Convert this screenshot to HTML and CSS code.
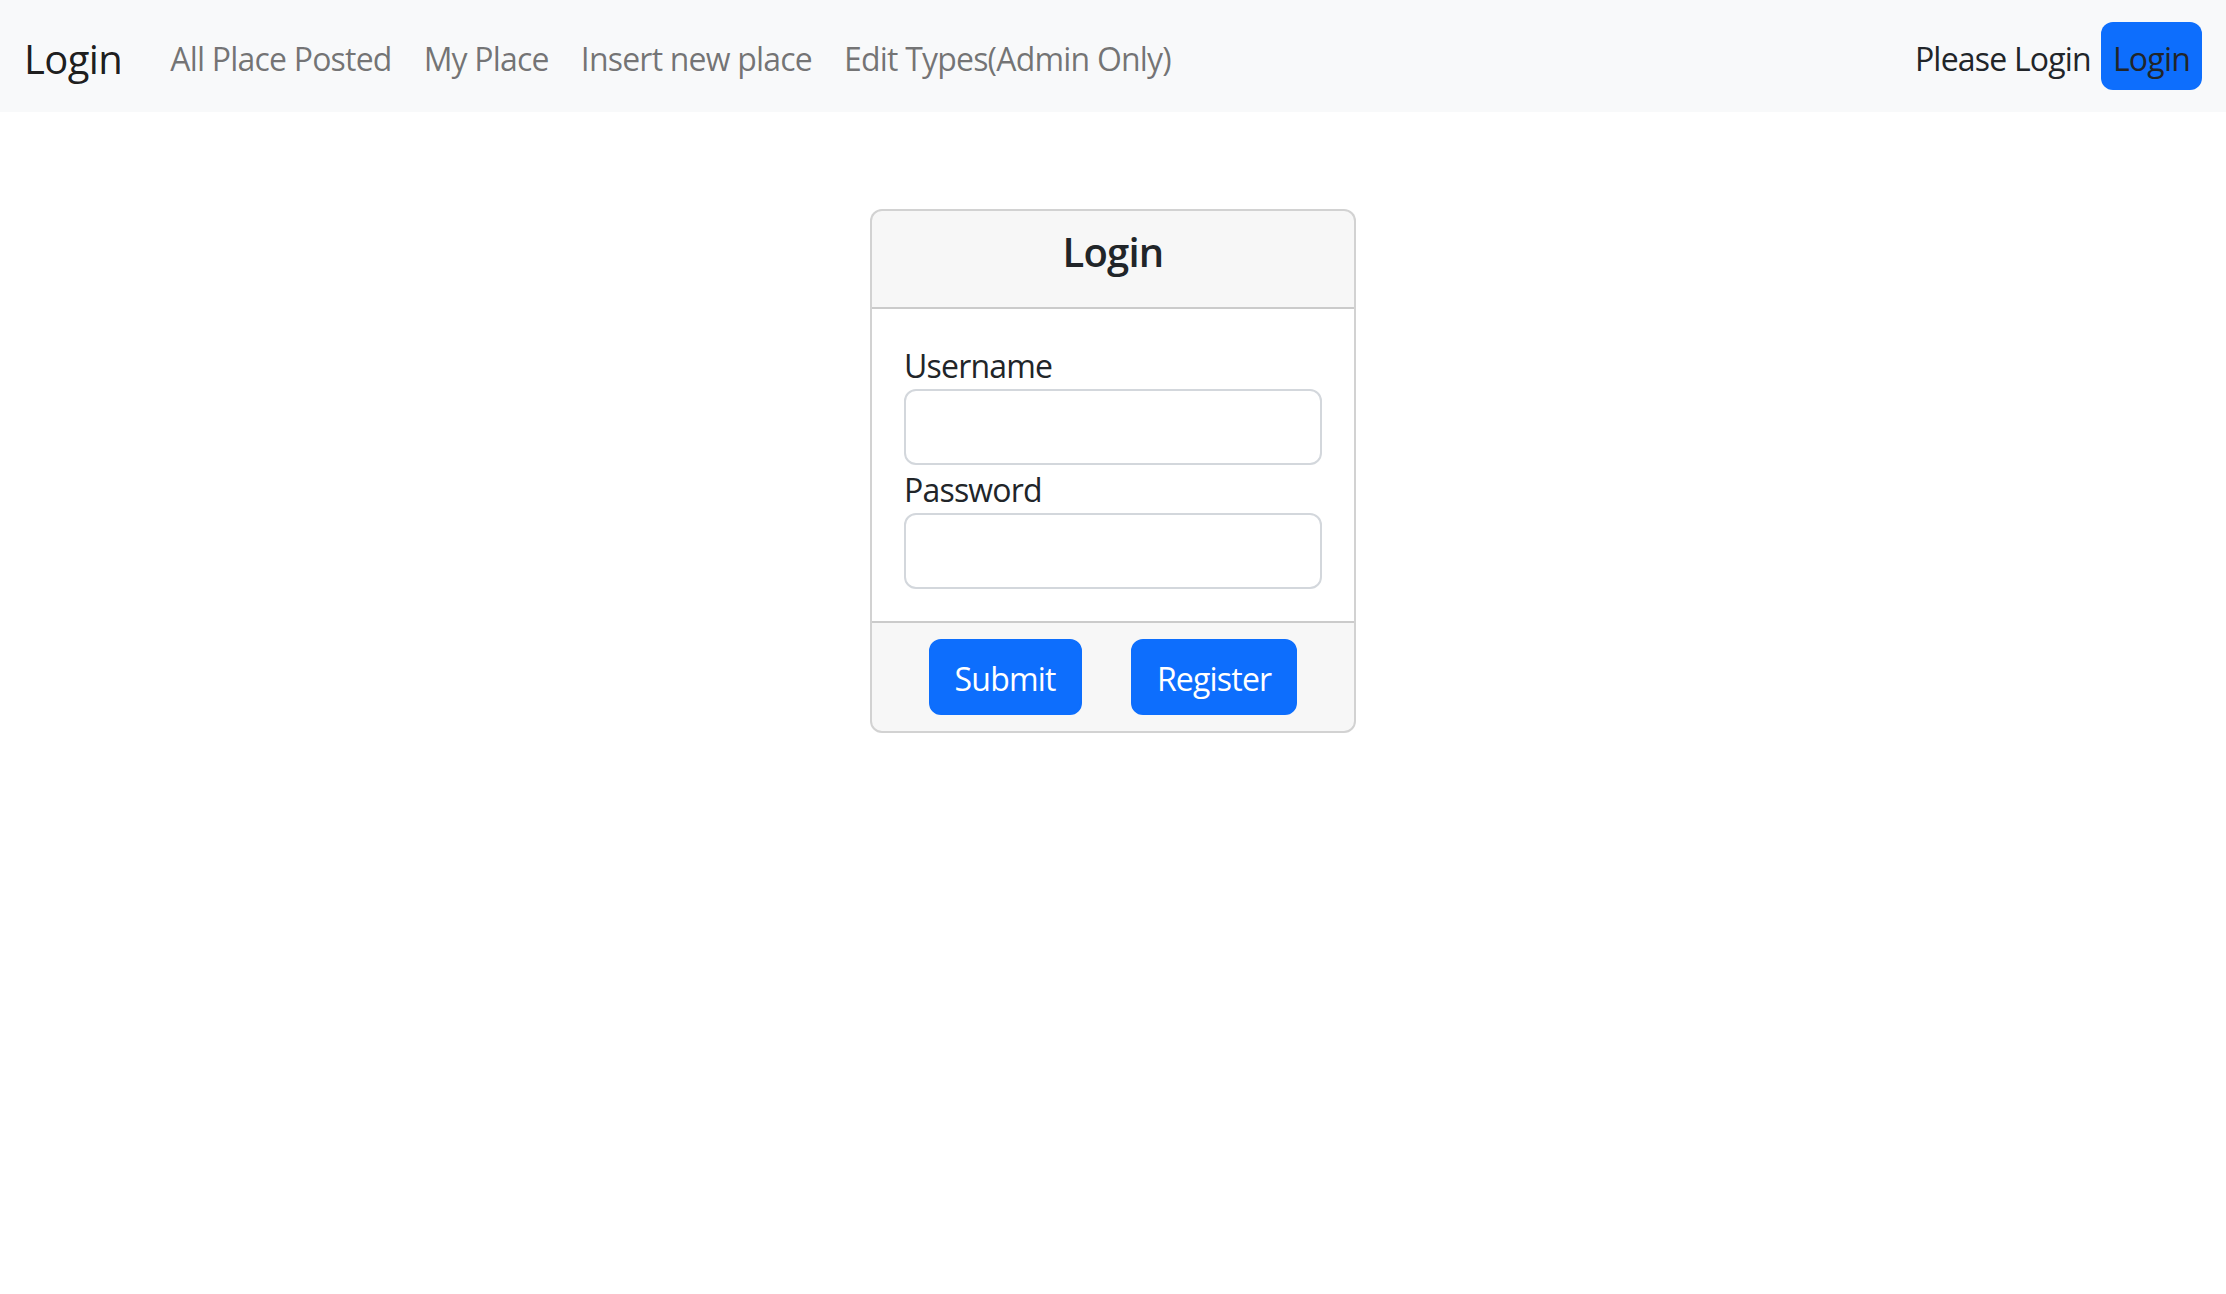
FILE: index.html
```html
<!DOCTYPE html>
<html lang="en">
<head>
<meta charset="utf-8">
<title>Login</title>
<link rel="stylesheet" href="styles.css">
</head>
<body>
<nav class="navbar">
  <a class="brand" href="#">Login</a>
  <ul class="nav-links">
    <li><a class="nav-link" href="#">All Place Posted</a></li>
    <li><a class="nav-link" href="#">My Place</a></li>
    <li><a class="nav-link" href="#">Insert new place</a></li>
    <li><a class="nav-link" href="#">Edit Types(Admin Only)</a></li>
  </ul>
  <div class="nav-right">
    <span class="nav-text">Please Login</span>
    <a class="nav-login" href="#">Login</a>
  </div>
</nav>
<main class="main">
  <form class="card">
    <div class="card-header">
      <h5 class="card-title">Login</h5>
    </div>
    <div class="card-body">
      <label class="label" for="username">Username</label>
      <input class="input" id="username" type="text">
      <label class="label" for="password">Password</label>
      <input class="input" id="password" type="password">
    </div>
    <div class="card-footer">
      <button class="btn" type="button">Submit</button>
      <button class="btn" type="button">Register</button>
    </div>
  </form>
</main>
</body>
</html>
```
FILE: styles.css
```css
* { box-sizing: border-box; }
html, body { margin: 0; padding: 0; }
body {
  font-family: "Open Sans", "Noto Sans", sans-serif;
  font-size: 32px;
  line-height: 48px;
  letter-spacing: -0.8px;
  color: #212529;
  background: #fff;
}
a { text-decoration: none; }

.navbar {
  display: flex;
  align-items: center;
  height: 112px;
  padding: 5px 24px 0;
  background: #f8f9fa;
}
.brand {
  font-size: 40px;
  line-height: 60px;
  letter-spacing: -0.6px;
  color: rgba(0,0,0,.9);
  margin-right: 32px;
}
.nav-links {
  display: flex;
  list-style: none;
  margin: 0;
  padding: 0;
}
.nav-link {
  display: block;
  padding: 16px;
  color: rgba(0,0,0,.55);
}
.nav-right {
  margin-left: auto;
  display: flex;
  align-items: center;
  gap: 10px;
}
.nav-text { color: #212529; }
.nav-login {
  display: block;
  margin-top: -6px;
  padding: 13px 12px 7px;
  background: #0d6efd;
  color: #212529;
  border-radius: 12px;
}

.main {
  display: flex;
  justify-content: center;
  padding-top: 97px;
}
.card {
  width: 486px;
  border: 2px solid rgba(0,0,0,.175);
  border-radius: 12px;
  background: #fff;
  overflow: hidden;
}
.card-header {
  background: rgba(0,0,0,.03);
  padding: 17px 32px 15px;
  border-bottom: 2px solid rgba(0,0,0,.175);
}
.card-title {
  margin: 0 0 16px;
  font-size: 40px;
  line-height: 48px;
  font-weight: 600;
  text-align: center;
}
.card-body {
  padding: 32px;
}
.label {
  display: block;
  line-height: 48px;
  padding-top: 1px;
  margin-bottom: -1px;
}
.input {
  display: block;
  width: 100%;
  height: 76px;
  border: 2px solid #d3d7dc;
  border-radius: 12px;
  background: #fff;
  font: inherit;
  padding: 12px 24px;
}
.card-footer {
  display: flex;
  justify-content: space-around;
  padding: 16px 32px;
  background: rgba(0,0,0,.03);
  border-top: 2px solid rgba(0,0,0,.175);
}
.btn {
  font: inherit;
  letter-spacing: -0.8px;
  line-height: 48px;
  padding: 14px 24px 10px;
  border: 2px solid #0d6efd;
  background: #0d6efd;
  color: #fff;
  border-radius: 12px;
  cursor: pointer;
}
```
